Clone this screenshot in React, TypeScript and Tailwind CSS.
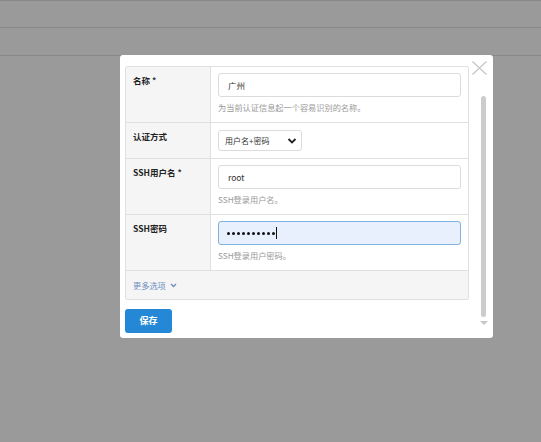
import React from "react";

const font = { fontFamily: '"Noto Sans CJK SC", "Noto Sans", sans-serif' };

function Label({ children, req }: { children: React.ReactNode; req?: boolean }) {
  return (
    <div className="w-[85px] shrink-0 bg-[#f5f5f5] border-r border-[#e0e0e0] pl-[7px] pt-[6px] text-[8.5px] font-bold text-[#222] leading-[14px]">
      {children}
      {req && <span className="ml-[2px] text-[#333]">*</span>}
    </div>
  );
}

export default function App() {
  return (
    <div className="relative w-[541px] h-[442px] bg-[#9a9a9a] overflow-hidden" style={font}>
      <div className="border-t border-[#888] h-[27px]" />
      <div className="border-t border-[#888] h-[28px]" />
      <div className="border-t border-[#888]" />

      <div className="absolute left-[120px] top-[55px] w-[373px] h-[283px] bg-white rounded-[3px]">
        <div className="absolute left-[352px] top-[6px] w-[15px] h-[14px]">
          <svg width="15" height="14" viewBox="0 0 15 14">
            <path d="M0.5 0.5 L14.5 13.5 M14.5 0.5 L0.5 13.5" stroke="#c8c8c8" strokeWidth="1.3" />
          </svg>
        </div>
        <div className="absolute left-[361px] top-[41px] w-[5px] h-[221px] rounded-[3px] bg-[#cccccc]" />
        <div className="absolute left-[360px] top-[266px] w-0 h-0 border-l-[4px] border-r-[4px] border-t-[4px] border-l-transparent border-r-transparent border-t-[#c8c8c8]" />

        <div className="ml-[5px] mt-[11px] w-[344px] border border-[#e0e0e0] rounded-[2px]">
          {/* Row 1 */}
          <div className="flex h-[56px] border-b border-[#e0e0e0]">
            <Label req>名称</Label>
            <div className="flex-1 px-[7px] pt-[6px]">
              <div className="h-[24px] border border-[#dcdcdc] rounded-[3px] flex items-center pl-[9px] text-[8.5px] text-[#333]">广州</div>
              <div className="mt-[4px] text-[8.2px] text-[#999] leading-[12px]">为当前认证信息起一个容易识别的名称。</div>
            </div>
          </div>
          {/* Row 2 */}
          <div className="flex h-[36px] border-b border-[#e0e0e0]">
            <Label>认证方式</Label>
            <div className="flex-1 px-[7px] pt-[7px]">
              <div className="w-[84px] h-[21px] border border-[#dcdcdc] rounded-[3px] flex items-center justify-between pl-[6px] pr-[4px] text-[8px] text-[#333]">
                <span>用户名+密码</span>
                <svg width="10" height="8" viewBox="0 0 10 8">
                  <path d="M1.5 2 L5 5.5 L8.5 2" stroke="#222" strokeWidth="1.8" fill="none" />
                </svg>
              </div>
            </div>
          </div>
          {/* Row 3 */}
          <div className="flex h-[56px] border-b border-[#e0e0e0]">
            <Label req>SSH用户名</Label>
            <div className="flex-1 px-[7px] pt-[6px]">
              <div className="h-[24px] border border-[#dcdcdc] rounded-[3px] flex items-center pl-[9px] text-[8.5px] text-[#333]">root</div>
              <div className="mt-[4px] text-[8.2px] text-[#999] leading-[12px]">SSH登录用户名。</div>
            </div>
          </div>
          {/* Row 4 */}
          <div className="flex h-[56px] border-b border-[#e0e0e0]">
            <Label>SSH密码</Label>
            <div className="flex-1 px-[7px] pt-[6px]">
              <div className="h-[24px] border border-[#7fb2dc] bg-[#e8f0fe] rounded-[3px] flex items-center pl-[8px]">
                <div className="flex gap-[2px] items-center">
                  {Array.from({ length: 10 }).map((_, i) => (
                    <div key={i} className="w-[3px] h-[3px] rounded-full bg-[#111]" />
                  ))}
                </div>
                <div className="ml-[1px] w-[1px] h-[12px] bg-[#111]" />
              </div>
              <div className="mt-[4px] text-[8.2px] text-[#999] leading-[12px]">SSH登录用户密码。</div>
            </div>
          </div>
          {/* More */}
          <div className="h-[28px] bg-[#f5f5f5] flex items-center pl-[7px] text-[8.2px] text-[#6f8fbf]">
            <span>更多选项</span>
            <svg className="ml-[4px]" width="7" height="5" viewBox="0 0 7 5">
              <path d="M1 1 L3.5 3.5 L6 1" stroke="#6f8fbf" strokeWidth="1.4" fill="none" />
            </svg>
          </div>
        </div>

        <button className="ml-[5px] mt-[9px] w-[47px] h-[24px] rounded-[3px] bg-[#2488d6] text-white text-[9px] font-bold flex items-center justify-center">
          保存
        </button>
      </div>
    </div>
  );
}
